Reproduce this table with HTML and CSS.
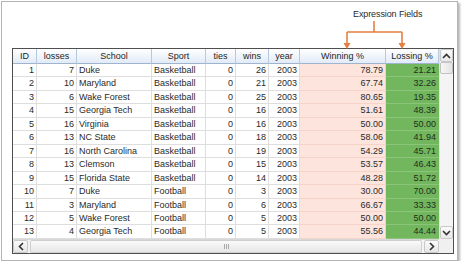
FILE: index.html
```html
<!DOCTYPE html>
<html>
<head>
<meta charset="utf-8">
<link rel="stylesheet" href="styles.css">
</head>
<body>
<div class="panel">
  <div class="annot">
    <span class="annot-label">Expression Fields</span>
    <svg class="bracket" width="460" height="50" viewBox="0 0 460 50">
      <g stroke="#e6803f" stroke-width="1.6" fill="none">
        <path d="M372 19 V30 M345 30 H400 M345 30 V42 M400 30 V42"/>
      </g>
      <g fill="#e6803f">
        <path d="M341.5 41 H348.5 L345 47 Z"/>
        <path d="M396.5 41 H403.5 L400 47 Z"/>
      </g>
    </svg>
  </div>
  <div class="grid">
    <div class="data">
      <div class="row head">
        <div>ID</div><div>losses</div><div>School</div><div>Sport</div><div>ties</div><div>wins</div><div>year</div><div>Winning %</div><div>Lossing %</div>
      </div>
      <div class="row"><div class="r">1</div><div class="r">7</div><div>Duke</div><div>Basketball</div><div class="r">0</div><div class="r">26</div><div class="r">2003</div><div class="r win">78.79</div><div class="r loss">21.21</div></div>
      <div class="row"><div class="r">2</div><div class="r">10</div><div>Maryland</div><div>Basketball</div><div class="r">0</div><div class="r">21</div><div class="r">2003</div><div class="r win">67.74</div><div class="r loss">32.26</div></div>
      <div class="row"><div class="r">3</div><div class="r">6</div><div>Wake Forest</div><div>Basketball</div><div class="r">0</div><div class="r">25</div><div class="r">2003</div><div class="r win">80.65</div><div class="r loss">19.35</div></div>
      <div class="row"><div class="r">4</div><div class="r">15</div><div>Georgia Tech</div><div>Basketball</div><div class="r">0</div><div class="r">16</div><div class="r">2003</div><div class="r win">51.61</div><div class="r loss">48.39</div></div>
      <div class="row"><div class="r">5</div><div class="r">16</div><div>Virginia</div><div>Basketball</div><div class="r">0</div><div class="r">16</div><div class="r">2003</div><div class="r win">50.00</div><div class="r loss">50.00</div></div>
      <div class="row"><div class="r">6</div><div class="r">13</div><div>NC State</div><div>Basketball</div><div class="r">0</div><div class="r">18</div><div class="r">2003</div><div class="r win">58.06</div><div class="r loss">41.94</div></div>
      <div class="row"><div class="r">7</div><div class="r">16</div><div>North Carolina</div><div>Basketball</div><div class="r">0</div><div class="r">19</div><div class="r">2003</div><div class="r win">54.29</div><div class="r loss">45.71</div></div>
      <div class="row"><div class="r">8</div><div class="r">13</div><div>Clemson</div><div>Basketball</div><div class="r">0</div><div class="r">15</div><div class="r">2003</div><div class="r win">53.57</div><div class="r loss">46.43</div></div>
      <div class="row"><div class="r">9</div><div class="r">15</div><div>Florida State</div><div>Basketball</div><div class="r">0</div><div class="r">14</div><div class="r">2003</div><div class="r win">48.28</div><div class="r loss">51.72</div></div>
      <div class="row"><div class="r">10</div><div class="r">7</div><div>Duke</div><div>Football</div><div class="r">0</div><div class="r">3</div><div class="r">2003</div><div class="r win">30.00</div><div class="r loss">70.00</div></div>
      <div class="row"><div class="r">11</div><div class="r">3</div><div>Maryland</div><div>Football</div><div class="r">0</div><div class="r">6</div><div class="r">2003</div><div class="r win">66.67</div><div class="r loss">33.33</div></div>
      <div class="row"><div class="r">12</div><div class="r">5</div><div>Wake Forest</div><div>Football</div><div class="r">0</div><div class="r">5</div><div class="r">2003</div><div class="r win">50.00</div><div class="r loss">50.00</div></div>
      <div class="row"><div class="r">13</div><div class="r">4</div><div>Georgia Tech</div><div>Football</div><div class="r">0</div><div class="r">5</div><div class="r">2003</div><div class="r win">55.56</div><div class="r loss">44.44</div></div>
    </div>
    <div class="vscroll">
      <div class="sbtn"><svg width="9" height="6" viewBox="0 0 9 6"><path d="M1 5 L4.5 1.5 L8 5" stroke="#333" stroke-width="1.6" fill="none"/></svg></div>
      <div class="vthumb"></div>
      <div class="vtrack"></div>
      <div class="sbtn"><svg width="9" height="6" viewBox="0 0 9 6"><path d="M1 1 L4.5 4.5 L8 1" stroke="#333" stroke-width="1.6" fill="none"/></svg></div>
    </div>
    <div class="hscroll">
      <div class="hbtn"><svg width="6" height="9" viewBox="0 0 6 9"><path d="M5 1 L1.5 4.5 L5 8" stroke="#333" stroke-width="1.6" fill="none"/></svg></div>
      <div class="hthumb"><span class="grip"></span></div>
      <div class="hbtn"><svg width="6" height="9" viewBox="0 0 6 9"><path d="M1 1 L4.5 4.5 L1 8" stroke="#333" stroke-width="1.6" fill="none"/></svg></div>
    </div>
    <div class="corner"></div>
  </div>
</div>
</body>
</html>
```
FILE: styles.css
```css
html, body {
  margin: 0;
  padding: 0;
  background: #ffffff;
}
body {
  font-family: "Liberation Sans", Arial, sans-serif;
  color: #2a2a2a;
}
.panel {
  position: relative;
  box-sizing: border-box;
  width: 457px;
  height: 260px;
  margin: 1px 0 0 1px;
  border: 1px solid #b4b4b4;
  box-shadow: 2px 2px 2px rgba(0, 0, 0, 0.28);
  background: #ffffff;
  padding-left: 10px;
}
.annot {
  position: relative;
  height: 46px;
}
.annot-label {
  position: absolute;
  left: 341px;
  top: 7px;
  font-size: 9px;
  color: #2b2b2b;
  letter-spacing: -0.1px;
}
.bracket {
  position: absolute;
  left: -10px;
  top: 0;
}
.grid {
  box-sizing: border-box;
  width: 442px;
  height: 206px;
  border: 1px solid #4f4f4f;
  display: grid;
  grid-template-columns: 426px 14px;
  grid-template-rows: 190px 14px;
}
.data {
  overflow: hidden;
}
.row {
  display: grid;
  grid-template-columns: 24px 40px 75px 54px 30px 33px 31px 86px 53px;
  height: 13.4615px;
  font-size: 9px;
  line-height: 13px;
}
.row > div {
  box-sizing: border-box;
  border-right: 1px solid #dedede;
  border-bottom: 1px solid #dedede;
  padding: 0 2px;
  white-space: nowrap;
  overflow: hidden;
}
.row > div.r {
  text-align: right;
}
.row > div.win {
  background: #fde4dc;
  border-bottom-color: #f6d3c8;
  border-right-color: #f0cfc4;
}
.row > div.loss {
  background: #72b75e;
  border-bottom-color: #8cc47c;
  border-right-color: #72b75e;
  color: #1f2f1c;
}
.row.head {
  height: 15px;
  background: linear-gradient(#ffffff, #dfe9f6);
}
.row.head > div {
  text-align: center;
  line-height: 14px;
  color: #1e1e1e;
  border-right: 1px solid #b7c9df;
  border-bottom: 1px solid #9fb4cf;
}
.vscroll {
  display: flex;
  flex-direction: column;
  background: #f4f4f4;
  border-left: 1px solid #e2e2e2;
}
.sbtn {
  height: 13px;
  display: flex;
  align-items: center;
  justify-content: center;
  box-sizing: border-box;
  border: 1px solid #c9c9c9;
  border-radius: 2px;
  background: linear-gradient(#fbfbfb, #e8e8e8);
}
.vthumb {
  height: 12px;
  box-sizing: border-box;
  border: 1px solid #c2c2c2;
  border-radius: 2px;
  background: linear-gradient(90deg, #f6f6f6, #e4e4e4);
}
.vtrack {
  flex: 1;
}
.hscroll {
  display: flex;
  background: #f4f4f4;
  border-top: 1px solid #d8d8d8;
}
.hbtn {
  width: 15px;
  display: flex;
  align-items: center;
  justify-content: center;
  box-sizing: border-box;
  border: 1px solid #c9c9c9;
  border-radius: 2px;
  background: linear-gradient(#fbfbfb, #e6e6e6);
}
.hthumb {
  flex: 1;
  margin: 0 2px;
  box-sizing: border-box;
  border: 1px solid #cfcfcf;
  border-radius: 2px;
  background: linear-gradient(#fafafa, #e6e6e6);
  display: flex;
  align-items: center;
  justify-content: center;
}
.grip {
  width: 5px;
  height: 5px;
  border-left: 1px solid #a9a9a9;
  border-right: 1px solid #a9a9a9;
  box-sizing: border-box;
  background: linear-gradient(90deg, transparent 1px, #a9a9a9 1px, #a9a9a9 2px, transparent 2px);
}
.corner {
  background: #f0f0f0;
}
```
